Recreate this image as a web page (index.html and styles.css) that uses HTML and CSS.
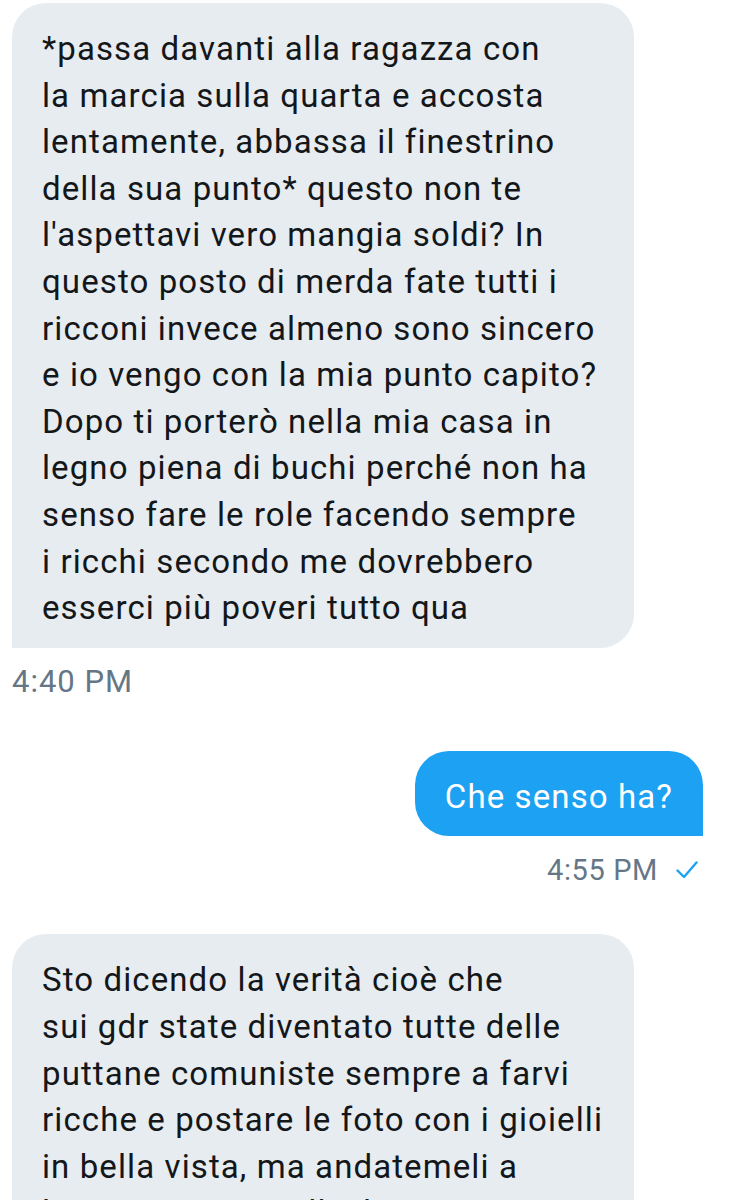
FILE: index.html
```html
<!DOCTYPE html>
<html lang="it">
<head>
    <meta charset="UTF-8">
    <meta name="viewport" content="width=device-width, initial-scale=1.0">
    <title>Messaggi</title>
    <link rel="stylesheet" href="styles.css">
</head>
<body>
    <!-- Conversation thread -->
    <div class="thread">

        <div class="msg received">
            <p class="bubble">*passa davanti alla ragazza con<br>la marcia sulla quarta e accosta<br>lentamente, abbassa il finestrino<br>della sua punto* questo non te<br>l'aspettavi vero mangia soldi? In<br>questo posto di merda fate tutti i<br>ricconi invece almeno sono sincero<br>e io vengo con la mia punto capito?<br>Dopo ti porterò nella mia casa in<br>legno piena di buchi perché non ha<br>senso fare le role facendo sempre<br>i ricchi secondo me dovrebbero<br>esserci più poveri tutto qua</p>
            <div class="meta">4:40 PM</div>
        </div>

        <div class="msg sent">
            <p class="bubble">Che senso ha?</p>
            <div class="meta">
                4:55 PM
                <!-- sent tick -->
                <svg class="tick" viewBox="0 0 22 18" width="22" height="18">
                    <polyline points="1.5,9.5 8,16 20.5,1.5" fill="none" stroke="#1da1f2" stroke-width="2.4" stroke-linecap="round" stroke-linejoin="round"/>
                </svg>
            </div>
        </div>

        <div class="msg received">
            <p class="bubble">Sto dicendo la verità cioè che<br>sui gdr state diventato tutte delle<br>puttane comuniste sempre a farvi<br>ricche e postare le foto con i gioielli<br>in bella vista, ma andatemeli a<br>lavorate tutti quelli che avete</p>
        </div>

    </div>
</body>
</html>
```

FILE: styles.css
```css
body {
    margin: 0;
    background-color: #fff;
    color: #14171a;
    font-family: Roboto, "Noto Sans", sans-serif;
}
/* Column of messages */
.thread {
    display: flex;
    flex-direction: column;
    padding: 3px 29px 0 12px;
}
.msg {
    display: flex;
    flex-direction: column;
    margin-bottom: 51px;
}
.received {
    align-items: flex-start;
}
.sent {
    align-items: flex-end;
    margin-bottom: 46px;
}
/* Speech bubbles */
.bubble {
    margin: 0;
    font-size: 33px;
    letter-spacing: 1.1px;
    line-height: 46.6px;
    padding: 23px 30px 16px;
    border-radius: 34px;
}
.received .bubble {
    background-color: #e6ecf0;
    width: 622px;
    box-sizing: border-box;
    border-bottom-left-radius: 0; /* tail corner */
}
.sent .bubble {
    background-color: #1da1f2;
    color: #fff;
    border-bottom-right-radius: 0; /* tail corner */
}
/* Time under each bubble */
.meta {
    display: flex;
    align-items: center;
    gap: 18px;
    margin-top: 16px;
    font-size: 31px;
    letter-spacing: 1px;
    line-height: 36px;
    color: #657786;
}
.sent .meta {
    margin-top: 16px;
    margin-right: 5px;
    font-size: 29px;
    letter-spacing: 0.6px;
}
.tick {
    display: block;
}
```
